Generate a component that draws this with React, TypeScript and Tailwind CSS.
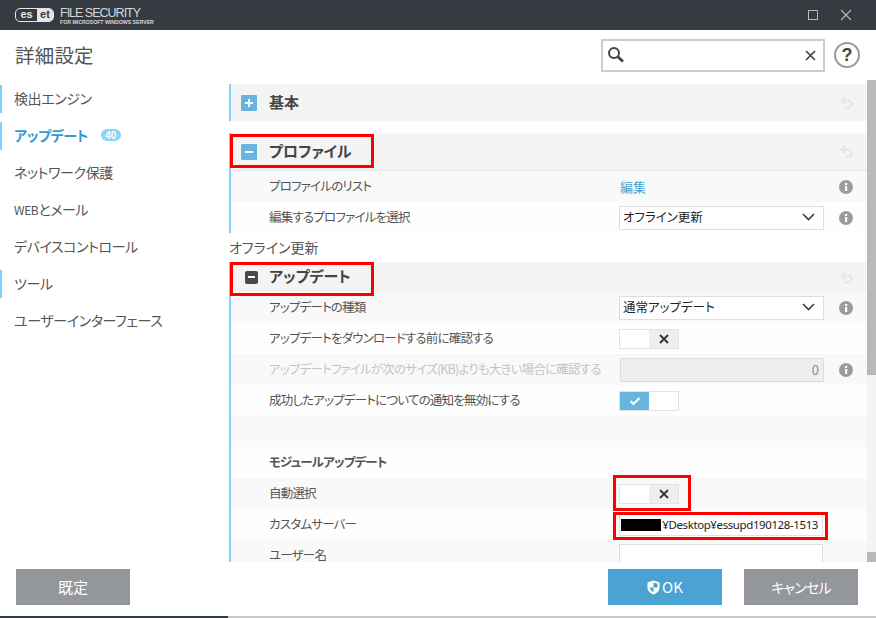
import React from 'react';
import { Undo2 } from 'lucide-react';

const jp = "font-['Noto_Sans_CJK_JP','Noto_Sans',sans-serif] [font-feature-settings:'palt']";

function InfoIcon() {
  return (
    <svg width="14" height="14" viewBox="0 0 14 14" className="shrink-0">
      <circle cx="7" cy="7" r="7" fill="#9b9b9b" />
      <rect x="6" y="6" width="2.2" height="5" fill="#fff" />
      <rect x="6" y="3" width="2.2" height="2" fill="#fff" />
    </svg>
  );
}

function Toggle({ on }: { on?: boolean }) {
  return (
    <div className="flex h-[20px] w-[60px] border border-[#e2e2e2] bg-white">
      {on ? (
        <div className="flex w-[29px] items-center justify-center bg-[#67b5df]">
          <svg width="12" height="10" viewBox="0 0 12 10">
            <path d="M1.5 5 L4.5 8 L10.5 2" fill="none" stroke="#fff" strokeWidth="2.2" />
          </svg>
        </div>
      ) : (
        <>
          <div className="w-[29px]" />
          <div className="flex flex-1 items-center justify-center bg-[#eeeeee]">
            <svg width="10" height="10" viewBox="0 0 10 10">
              <path d="M1 1 L9 9 M9 1 L1 9" stroke="#3a3a3a" strokeWidth="2" />
            </svg>
          </div>
        </>
      )}
    </div>
  );
}

function Select({ value }: { value: string }) {
  return (
    <div className="flex h-[24px] w-[205px] items-center justify-between border border-[#dddddd] bg-white pb-[1px] pl-[3px] pr-[8px] text-[12.5px] text-[#222222]">
      <span>{value}</span>
      <svg width="13" height="8" viewBox="0 0 13 8">
        <path d="M1 1 L6.5 6.5 L12 1" fill="none" stroke="#3c3c3c" strokeWidth="1.6" />
      </svg>
    </div>
  );
}

function Row({ label, shade, dim, bold, info, children }: { label?: string; shade?: boolean; dim?: boolean; bold?: boolean; info?: boolean; children?: React.ReactNode }) {
  return (
    <div className={`flex h-[31px] shrink-0 items-center ${shade ? 'bg-[#f9f9f9]' : 'bg-[#fefefe]'}`}>
      <div className={`w-[388px] shrink-0 whitespace-nowrap pb-[1px] pl-[38px] text-[12.5px] tracking-[-0.8px] ${dim ? 'text-[#c4c4c4]' : 'text-[#555555]'} ${bold ? 'font-bold text-[#444444]' : ''}`}>
        {label}
      </div>
      <div className="w-[220px] shrink-0">{children}</div>
      {info && <InfoIcon />}
    </div>
  );
}

function SectionHead({ title, icon, tall }: { title: string; icon: 'plus' | 'minus' | 'dark'; tall?: boolean }) {
  return (
    <div className={`flex shrink-0 items-center bg-[#f4f4f4] pr-[13px] ${tall ? 'h-[37px]' : 'h-[30px]'}`}>
      <div className={`w-[38px] ${icon === 'dark' ? 'pl-[14px]' : 'pl-[10px]'}`}>
        {icon === 'dark' ? (
          <div className="flex h-[13px] w-[13px] items-center justify-center rounded-[2px] bg-[#4a4a4a]">
            <div className="h-[2px] w-[7px] bg-white" />
          </div>
        ) : (
          <div className="relative flex h-[16px] w-[16px] items-center justify-center rounded-[1px] bg-[#67b5df]">
            <div className="h-[2px] w-[8px] bg-white" />
            {icon === 'plus' && <div className="absolute h-[8px] w-[2px] bg-white" />}
          </div>
        )}
      </div>
      <div className="flex-1 pb-[1px] text-[15px] font-bold text-[#444444]">{title}</div>
      <Undo2 size={15} strokeWidth={3} className="text-[#e4e4e4]" />
    </div>
  );
}

function NavItem({ label, bar, active, badge }: { label: React.ReactNode; bar?: boolean; active?: boolean; badge?: string }) {
  return (
    <div className="flex h-[37px] items-center">
      <div className={`flex h-[28px] w-full items-center gap-[13px] border-l-2 pb-[1px] pl-[12px] text-[14px] tracking-[-0.4px] ${bar ? 'border-[#80d0ff]' : 'border-transparent'} ${active ? 'font-bold text-[#2f9bd6]' : 'text-[#555555]'}`}>
        <span>{label}</span>
        {badge && (
          <span className="flex h-[12px] w-[20px] items-center justify-center rounded-full bg-[#8ed3fb] font-['Liberation_Sans',sans-serif] text-[10px] font-bold tracking-normal text-white">
            {badge}
          </span>
        )}
      </div>
    </div>
  );
}

function FooterButton({ label, blue, narrow }: { label: React.ReactNode; blue?: boolean; narrow?: boolean }) {
  return (
    <div className={`flex h-[36px] w-[114px] items-center justify-center text-white ${narrow ? 'text-[14px] tracking-[-0.8px]' : 'text-[15px]'} ${blue ? 'bg-[#4aa3d3]' : 'bg-[#93979b]'}`}>
      {label}
    </div>
  );
}

export default function App() {
  return (
    <div className={`relative flex h-[618px] w-[876px] flex-col overflow-hidden bg-white ${jp}`}>
      {/* Title bar */}
      <div className="flex h-[30px] shrink-0 items-center bg-[#363b41] pl-[15px] pr-[24px]">
        <div className="flex h-[14px] w-[39px] items-center overflow-hidden rounded-[5px] border border-[#e6e6e6] font-['Liberation_Sans',sans-serif] text-[11px] font-bold leading-none">
          <span className="flex h-full w-[21px] items-center justify-center pb-[1px] text-[#e6e6e6]">es</span>
          <span className="flex h-full flex-1 items-center justify-center bg-[#e6e6e6] pb-[1px] text-[#363b41]">et</span>
        </div>
        <div className="ml-[6px] flex flex-col font-['Liberation_Sans',sans-serif] leading-none text-[#d5d7d9]">
          <span className="mt-[2px] text-[12.5px] tracking-[-1px]">FILE SECURITY</span>
          <span className="whitespace-nowrap text-[5.2px] font-bold">FOR MICROSOFT WINDOWS SERVER</span>
        </div>
        <div className="flex-1" />
        <div className="h-[10px] w-[10px] border border-[#b5b8bb]" />
        <svg width="12" height="12" viewBox="0 0 12 12" className="ml-[22px]">
          <path d="M1 1 L11 11 M11 1 L1 11" stroke="#b5b8bb" strokeWidth="1.1" />
        </svg>
      </div>

      {/* Header */}
      <div className="flex h-[50px] shrink-0 items-center pl-[15px] pr-[16px]">
        <div className="flex-1 text-[19.5px] tracking-[0.2px] text-[#555555]">詳細設定</div>
        <div className="flex h-[33px] w-[224px] items-center justify-between border-2 border-[#cccccc] px-[4px]">
          <svg width="18" height="18" viewBox="0 0 18 18">
            <circle cx="7" cy="7" r="5" fill="none" stroke="#444444" strokeWidth="2" />
            <path d="M10.5 10.5 L16 15.5" stroke="#444444" strokeWidth="3" />
          </svg>
          <svg width="11" height="11" viewBox="0 0 11 11" className="mr-[3px]">
            <path d="M1 1 L10 10 M10 1 L1 10" stroke="#444444" strokeWidth="1.7" />
          </svg>
        </div>
        <div className="ml-[9px] flex h-[26px] w-[26px] items-center justify-center rounded-full border-2 border-[#9b9b9b] font-['Liberation_Sans',sans-serif] text-[18px] font-bold text-[#444444]">
          ?
        </div>
      </div>

      {/* Body */}
      <div className="flex h-[482px] shrink-0 overflow-hidden">
        <div className="w-[229px] shrink-0">
          <NavItem label="検出エンジン" bar />
          <NavItem label="アップデート" bar active badge="40" />
          <NavItem label="ネットワーク保護" />
          <NavItem label={<><span className="text-[12px]">WEB</span>とメール</>} />
          <NavItem label="デバイスコントロール" />
          <NavItem label="ツール" bar />
          <NavItem label="ユーザーインターフェース" />
        </div>

        <div className="flex w-[638px] shrink-0 flex-col overflow-hidden pt-[4px]">
          <div className="shrink-0 border-l-2 border-[#80d0ff]">
            <SectionHead title="基本" icon="plus" tall />
          </div>
          <div className="h-[12px] shrink-0" />
          <div className="shrink-0 border-l-2 border-[#80d0ff]">
            <div className="border-b border-[#e4e4e4]">
              <SectionHead title="プロファイル" icon="minus" tall />
            </div>
            <Row label="プロファイルのリスト" shade info>
              <span className="relative bottom-[2px] pl-[1px] text-[13px] text-[#4aa3d3]">編集</span>
            </Row>
            <Row label="編集するプロファイルを選択" info>
              <Select value="オフライン更新" />
            </Row>
          </div>
          <div className="flex h-[29px] shrink-0 items-center text-[14px] text-[#555555]">オフライン更新</div>
          <div className="flex shrink-0 flex-col border-l-2 border-[#80d0ff]">
            <SectionHead title="アップデート" icon="dark" />
            <Row label="アップデートの種類" shade info>
              <Select value="通常アップデート" />
            </Row>
            <Row label="アップデートをダウンロードする前に確認する">
              <Toggle />
            </Row>
            <Row label="アップデートファイルが次のサイズ(KB)よりも大きい場合に確認する" shade dim info>
              <div className="ml-[1px] flex h-[24px] w-[204px] items-center justify-end border border-[#dcdcdc] bg-[#eeeeee] pr-[4px] text-[13px] text-[#888888]">
                0
              </div>
            </Row>
            <Row label="成功したアップデートについての通知を無効にする">
              <Toggle on />
            </Row>
            <Row shade />
            <Row label="モジュールアップデート" bold />
            <Row label="自動選択" shade>
              <Toggle />
            </Row>
            <Row label="カスタムサーバー">
              <div className="flex h-[22px] w-[204px] items-center justify-between border border-[#e2e2e2] bg-white pl-[1px] pr-[4px] text-[11.5px] text-[#222222]">
                <div className="h-[12px] w-[40px] shrink-0 bg-black" />
                <span className="whitespace-nowrap font-['Noto_Sans',sans-serif] tracking-[-0.4px]">¥Desktop¥essupd190128-1513</span>
              </div>
            </Row>
            <Row label="ユーザー名" shade>
              <div className="h-[24px] w-[204px] border border-[#dddddd] bg-white" />
            </Row>
          </div>
        </div>

        {/* Scrollbar */}
        <div className="flex w-[9px] shrink-0 flex-col justify-between bg-[#f4f4f4]">
          <div className="h-[295px] bg-[#b9b9b9]" />
          <div className="h-[10px] bg-[#b9b9b9]" />
        </div>
      </div>

      {/* Footer */}
      <div className="flex h-[54px] shrink-0 items-start pl-[16px] pr-[18px] pt-[7px]">
        <FooterButton label="既定" />
        <div className="flex-1" />
        <FooterButton
          blue
          label={
            <span className="flex items-center gap-[2px]">
              <svg width="13" height="15" viewBox="0 0 13 15">
                <path d="M6.5 0.5 L12.5 2.5 V7.5 C12.5 11 9.5 13.5 6.5 14.5 C3.5 13.5 0.5 11 0.5 7.5 V2.5 Z" fill="#fff" />
                <path d="M6.5 2.5 L10.5 3.8 V7.5 H6.5 Z M6.5 7.5 V12.3 C4.8 11.6 3 10 2.6 7.5 Z" fill="#4aa3d3" />
              </svg>
              OK
            </span>
          }
        />
        <div className="w-[22px]" />
        <FooterButton narrow label="キャンセル" />
      </div>

      {/* Bottom edge */}
      <div className="flex h-[2px] shrink-0">
        <div className="w-[228px] bg-[#363b41]" />
        <div className="flex-1 bg-[#c8c8c8]" />
      </div>

      {/* Red annotation boxes */}
      <div className="absolute left-[230px] top-[134px] h-[34px] w-[144px] border-[3px] border-[#ff0000]" />
      <div className="absolute left-[230px] top-[262px] h-[34px] w-[144px] border-[3px] border-[#ff0000]" />
      <div className="absolute left-[613px] top-[475px] h-[36px] w-[78px] border-[3px] border-[#ff0000]" />
      <div className="absolute left-[613px] top-[512px] h-[28px] w-[215px] border-[3px] border-[#ff0000]" />
    </div>
  );
}
